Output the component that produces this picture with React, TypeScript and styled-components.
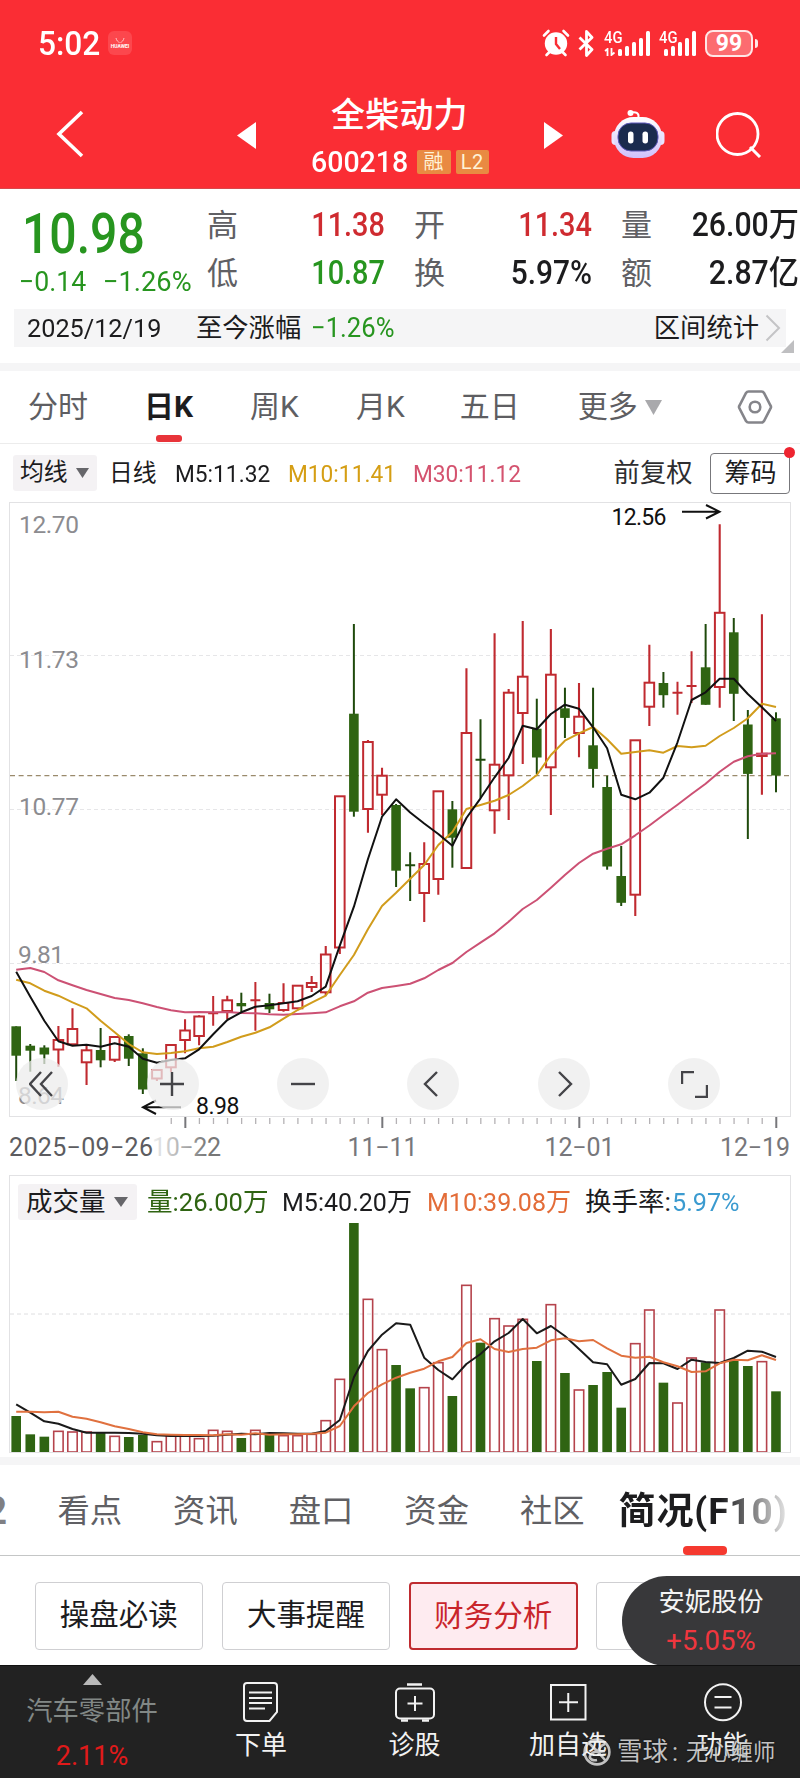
import React from 'react';
import styled, { createGlobalStyle, css } from 'styled-components';

const GlobalStyle = createGlobalStyle`
  * { box-sizing: border-box; }
  body {
    margin: 0;
    background: #fff;
    color: #1c1c1e;
    font-family: Roboto, 'Noto Sans CJK SC', sans-serif;
  }
  svg { display: block; flex: none; }
`;

const RED = '#c02a30';
const GREEN = '#2f6412';

const Screen = styled.div`
  width: 800px;
  height: 1778px;
  overflow: hidden;
  display: flex;
  flex-direction: column;
  background: #fff;
`;

const Label = styled.span<{ $size?: number; $color?: string; $weight?: number; $ml?: number; $dy?: number }>`
  flex: none;
  white-space: nowrap;
  line-height: 1;
  font-size: ${p => p.$size ?? 26}px;
  color: ${p => p.$color ?? '#1c1c1e'};
  font-weight: ${p => p.$weight ?? 400};
  margin-left: ${p => p.$ml ?? 0}px;
  margin-top: ${p => p.$dy ?? 0}px;
`;

/* Condensed figures: the glyphs are narrowed while the box keeps a fixed width */
const Figure = styled(Label)<{ $w: number; $stretch: number; $right?: boolean }>`
  display: flex;
  width: ${p => p.$w}px;
  transform: scaleX(${p => p.$stretch});
  transform-origin: ${p => (p.$right ? 'right' : 'left')} center;
  justify-content: ${p => (p.$right ? 'flex-end' : 'flex-start')};
`;

/* ---------- header ---------- */

const Header = styled.header`
  height: 189px;
  flex: none;
  background: #fa2d34;
  border-bottom: 1px solid #d8484c;
  color: #fff;
`;

const StatusBar = styled.div`
  height: 86px;
  display: flex;
  align-items: center;
  padding: 0 42px 0 38px;
`;

const HuaweiBadge = styled.div`
  width: 24px;
  height: 24px;
  margin-left: 9px;
  border-radius: 6px;
  background: #fc474d;
  display: flex;
  flex-direction: column;
  align-items: center;
  justify-content: center;
  font: 700 5px/6px Roboto, sans-serif;
`;

const StatusIcons = styled.div`
  margin-left: auto;
  display: flex;
  align-items: center;
`;

const Signal = styled.div<{ $w: number; $ml: number }>`
  position: relative;
  width: ${p => p.$w}px;
  height: 26px;
  margin-left: ${p => p.$ml}px;
  display: flex;
  align-items: flex-end;
  justify-content: flex-end;
  gap: 3px;
`;

const SignalName = styled.span`
  position: absolute;
  left: 0;
  top: -1px;
  font-size: 17px;
  line-height: 17px;
  font-weight: 500;
  transform: scaleX(0.87);
  transform-origin: left;
`;

const SignalArrows = styled.svg`
  position: absolute;
  left: 0;
  bottom: 0;
`;

const SignalBar = styled.i<{ $h: number }>`
  width: 4px;
  height: ${p => p.$h}px;
  border-radius: 1.5px;
  background: #fff;
`;

const Battery = styled.div`
  width: 48px;
  height: 27px;
  margin-left: 9px;
  border: 2px solid #ffe6e6;
  border-radius: 8px;
  background: #fc6c70;
  display: flex;
  align-items: center;
  justify-content: center;
  font-size: 23px;
  line-height: 23px;
  font-weight: 700;
`;

const BatteryNub = styled.i`
  width: 3px;
  height: 9px;
  margin-left: 2px;
  border-radius: 0 3px 3px 0;
  background: #ffe6e6;
`;

const TitleBar = styled.div`
  height: 98px;
  display: flex;
  align-items: center;
`;

const TitleBlock = styled.div`
  width: 178px;
  height: 92px;
  margin: 0 55px 0 55px;
  padding-top: 2px;
  display: flex;
  flex-direction: column;
`;

const StockName = styled.div`
  padding-left: 20px;
  font-size: 34px;
  line-height: 48px;
  font-weight: 500;
  letter-spacing: 0.2px;
  white-space: nowrap;
`;

const CodeLine = styled.div`
  display: flex;
  align-items: center;
  height: 40px;
  margin-top: 4px;
`;

const Badge = styled.span<{ $ml: number }>`
  width: 33.5px;
  height: 24px;
  margin-left: ${p => p.$ml}px;
  border-radius: 2px;
  background: #e98a42;
  color: #fff3d8;
  font-size: 20px;
  line-height: 24px;
  text-align: center;
  letter-spacing: 0.5px;
`;

/* ---------- quote ---------- */

const Quote = styled.section`
  height: 120px;
  flex: none;
  display: flex;
  overflow: hidden;
`;

const LastPrice = styled.div`
  width: 208px;
  flex: none;
  padding: 18px 0 0 20px;
`;

const PriceChange = styled.div`
  display: flex;
  margin-top: 6px;
`;

const StatColumn = styled.div<{ $ml: number }>`
  width: 178px;
  flex: none;
  margin-left: ${p => p.$ml}px;
  padding-top: 12px;
`;

const Stat = styled.div`
  height: 48px;
  display: flex;
  align-items: center;
  justify-content: space-between;
`;

const RangeBar = styled.div`
  height: 38px;
  flex: none;
  margin: 0 14px;
  padding: 0 5px 0 13px;
  background: #f5f5f6;
  display: flex;
  align-items: center;
  position: relative;
`;

const Fold = styled.svg`
  position: absolute;
  right: -8px;
  bottom: -6px;
`;

const Band = styled.div<{ $mt: number }>`
  height: 8px;
  flex: none;
  margin-top: ${p => p.$mt}px;
  background: #f5f5f6;
`;

/* ---------- period tabs ---------- */

const PeriodTabs = styled.nav`
  height: 73px;
  flex: none;
  display: flex;
  align-items: center;
  border-bottom: 1px solid #ececec;
`;

const Period = styled.div<{ $active?: boolean; $ml: number }>`
  position: relative;
  margin-left: ${p => p.$ml}px;
  font-size: 30px;
  line-height: 72px;
  white-space: nowrap;
  color: ${p => (p.$active ? '#1c1c1e' : '#5e5e62')};
  font-weight: ${p => (p.$active ? 700 : 400)};
  ${p =>
    p.$active &&
    css`
      &::after {
        content: '';
        position: absolute;
        left: 12px;
        bottom: 1px;
        width: 26px;
        height: 7px;
        border-radius: 3px;
        background: #e8343a;
      }
    `}
`;

const IndicatorRow = styled.div`
  height: 58px;
  flex: none;
  display: flex;
  align-items: center;
  padding-left: 13px;
`;

const Picker = styled.div<{ $w: number; $pl: number }>`
  width: ${p => p.$w}px;
  height: 36px;
  flex: none;
  padding-left: ${p => p.$pl}px;
  border-radius: 3px;
  background: #f4f2f4;
  display: flex;
  align-items: center;
  gap: 8px;
`;

const ChipsButton = styled.div`
  position: relative;
  width: 80px;
  height: 41px;
  margin-left: 18px;
  border: 1.5px solid #77777b;
  border-radius: 4px;
  font-size: 26px;
  line-height: 38px;
  text-align: center;
  white-space: nowrap;
  &::after {
    content: '';
    position: absolute;
    right: -6px;
    top: -7px;
    width: 11px;
    height: 11px;
    border-radius: 50%;
    background: #ee2430;
  }
`;

/* ---------- charts ---------- */

const PriceArea = styled.section`
  position: relative;
  height: 673px;
  flex: none;
`;

const Controls = styled.div`
  position: absolute;
  left: 16.3px;
  top: 556px;
  display: flex;
  gap: 78.4px;
`;

const RoundButton = styled.div`
  width: 52px;
  height: 52px;
  border-radius: 50%;
  background: rgba(236, 236, 236, 0.74);
  display: flex;
  align-items: center;
  justify-content: center;
`;

const VolumePanel = styled.section`
  height: 278px;
  flex: none;
  margin: 0 9px;
  border: 1px solid #e2e2e4;
`;

const VolumeHead = styled.div`
  height: 46px;
  padding: 6px 0 0 8px;
  display: flex;
  align-items: center;
`;

/* ---------- lower sections ---------- */

const SectionTabs = styled.nav`
  height: 91px;
  flex: none;
  display: flex;
  align-items: center;
  border-bottom: 1.5px solid #c4c6c6;
  overflow: hidden;
`;

const SectionTab = styled.div<{ $ml: number }>`
  flex: none;
  margin-left: ${p => p.$ml}px;
  padding-top: 2px;
  font-size: 32.3px;
  line-height: 90px;
  color: #606064;
  white-space: nowrap;
`;

const CutTab = styled(SectionTab)`
  width: 7px;
  display: flex;
  justify-content: flex-end;
  font-weight: 700;
  font-size: 38px;
  color: #808084;
`;

const ActiveSection = styled.div`
  position: relative;
  flex: none;
  margin-left: 34px;
  padding-top: 3px;
  font-size: 37px;
  line-height: 87px;
  font-weight: 700;
  letter-spacing: 0.9px;
  white-space: nowrap;
  span {
    color: transparent;
    background: linear-gradient(90deg, #1c1c1e 60%, #e8e8e8 100%);
    background-clip: text;
  }
  &::after {
    content: '';
    position: absolute;
    left: 64px;
    bottom: 0;
    width: 44px;
    height: 9px;
    border-radius: 4px;
    background: #f5392f;
  }
`;

const ChipRow = styled.div`
  position: relative;
  height: 109px;
  flex: none;
  display: flex;
  gap: 18.8px;
  padding: 26px 0 0 34.5px;
  overflow: hidden;
`;

const Chip = styled.div<{ $active?: boolean }>`
  width: 168.5px;
  height: 68px;
  flex: none;
  border: ${p => (p.$active ? '2px solid #bf2b30' : '1.5px solid #cfcfd2')};
  border-radius: 4px;
  background: ${p => (p.$active ? '#feebf0' : '#fff')};
  color: ${p => (p.$active ? '#c9252b' : '#1c1c1e')};
  font-size: 29.5px;
  line-height: 65px;
  text-align: center;
  white-space: nowrap;
`;

const FloatingQuote = styled.aside`
  position: absolute;
  right: 0;
  top: 20px;
  width: 178px;
  height: 90px;
  padding: 13px 0 0;
  border-radius: 46px 0 0 46px;
  background: #38383a;
  display: flex;
  flex-direction: column;
  align-items: center;
  gap: 12px;
`;

const BottomNav = styled.footer`
  position: relative;
  height: 114px;
  flex: none;
  background: #222;
  border-top: 1px solid #111;
  display: flex;
`;

const Sector = styled.div`
  width: 184px;
  flex: none;
  padding-top: 8px;
  display: flex;
  flex-direction: column;
  align-items: center;
`;

const NavItem = styled.div<{ $w: number }>`
  width: ${p => p.$w}px;
  flex: none;
  padding-top: 15px;
  display: flex;
  flex-direction: column;
  align-items: center;
  gap: 8px;
  color: #f2f2f2;
  font-size: 26px;
  line-height: 28px;
  white-space: nowrap;
`;

const Watermark = styled.div`
  position: absolute;
  left: 583px;
  top: 71px;
  height: 30px;
  display: flex;
  align-items: center;
  color: rgba(235, 235, 235, 0.82);
  font-size: 25px;
  line-height: 30px;
  white-space: nowrap;
  text-shadow: 0 0 2px rgba(0, 0, 0, 0.7);
`;

/* ---------- data ---------- */

// up flag, body top, body bottom, high, low, top of the volume bar
type Candle = [0 | 1, number, number, number, number, number];

const candles: Candle[] = [
  [0, 1026.3, 1055.7, 1026.3, 1081, 738], [0, 1045.7, 1050.7, 1044, 1071.7, 793],
  [0, 1047.5, 1054.5, 1045.3, 1064, 800], [1, 1040, 1049.5, 1026, 1066.7, 784],
  [1, 1029, 1044.3, 1008.3, 1045, 786], [1, 1050.3, 1062.3, 1045, 1085, 786],
  [0, 1050, 1060.3, 1028, 1067.3, 788], [1, 1037, 1059.7, 1036, 1062, 799],
  [0, 1036, 1058.7, 1034.3, 1066, 801], [0, 1053.3, 1089.5, 1048.3, 1094, 795],
  [1, 1070, 1078.5, 1069, 1081, 815], [1, 1045, 1067.3, 1044, 1072, 797],
  [1, 1030.5, 1040, 1019.3, 1053.3, 797], [1, 1016.5, 1036, 1015.3, 1045.3, 806],
  [1, 1013.3, 1013.3, 996, 1025.7, 781], [1, 1000.3, 1011, 995.7, 1019, 784],
  [0, 1003, 1006.3, 992.7, 1012, 804], [1, 1000.3, 1000.3, 982, 1030.7, 781],
  [0, 1003, 1009.3, 993.7, 1013, 794], [1, 1003, 1010, 983.3, 1011.7, 797],
  [1, 985.7, 1008.3, 985, 1009, 797], [1, 983, 987, 976, 992, 793],
  [1, 954.5, 992.3, 946, 995, 752], [1, 796.3, 947.5, 796, 954, 628],
  [0, 713.7, 811.7, 624, 816.7, 159], [1, 742, 809, 740, 832.7, 388],
  [1, 775.7, 794.7, 767.7, 815, 539], [0, 805, 870.7, 804, 887, 585],
  [0, 865.3, 865.3, 852.3, 901, 655], [1, 864, 893, 842.3, 922, 653],
  [1, 791.3, 879, 791, 894.7, 578], [0, 809.3, 837.7, 801, 867.7, 678],
  [1, 733, 868, 668.3, 869, 346], [0, 759.7, 759.7, 719.3, 798.3, 518],
  [1, 764.7, 810.3, 633.3, 833.7, 446], [1, 692.7, 775.3, 689, 820, 468],
  [1, 676.7, 713, 621, 764, 448], [0, 728.7, 757.5, 698.7, 774, 573],
  [1, 674.7, 767.3, 629, 815, 404], [0, 708.3, 717.9, 687.7, 738, 609],
  [1, 716.7, 733, 683, 757.3, 660], [0, 745.3, 768.9, 687.7, 787.7, 645],
  [0, 787, 866.5, 775.7, 869.7, 606], [0, 876, 902.8, 846, 906, 713],
  [1, 740.3, 894.7, 740, 916, 521], [1, 682.7, 706.7, 644.7, 726, 420],
  [0, 683, 695.2, 672, 707.7, 638], [1, 692.7, 692.7, 681.7, 714.7, 699],
  [1, 686, 686, 651.3, 703, 564], [0, 667.3, 704.8, 624, 704.8, 577],
  [1, 612.8, 687, 524.3, 707.7, 420], [0, 632.3, 693.8, 618, 721, 571],
  [0, 724.5, 773.9, 710, 839, 588], [1, 753.7, 756, 614.3, 794.7, 575],
  [0, 718.3, 775.5, 712.3, 792.3, 664],
];

const ma5 = [971.7, 996.7, 1020.7, 1041.3, 1045.7, 1044.7, 1046.7, 1043.3, 1046.7, 1058.7, 1062.7, 1060, 1058.3, 1049.3, 1034.3, 1020, 1012.3, 1006.7, 1005.3, 1003.3, 1001.3, 996, 986.7, 945.7, 906.7, 859.3, 816.7, 799.3, 812.5, 823.5, 834, 845.7, 818, 798.3, 777.3, 758, 725.7, 729.3, 714, 704.7, 708.7, 727.3, 748.3, 794.7, 799.3, 792.7, 777.7, 742.3, 700, 692.3, 678.7, 678.7, 694, 707.3, 721];
const ma10 = [979.7, 983.3, 990.7, 995.7, 1002.3, 1008.3, 1020.7, 1032.3, 1044, 1052.3, 1054, 1053, 1051.3, 1048.3, 1046.7, 1042, 1036.7, 1032.7, 1027.3, 1018.7, 1010, 1002.7, 995.7, 975, 955, 929.3, 906, 892.7, 878.7, 865, 845, 832, 809, 805, 800.7, 795, 786, 775, 755, 740.7, 733.3, 727, 739.3, 753.7, 752, 750.3, 752.7, 746, 747.3, 745.7, 736, 728, 718.3, 703.7, 707];
const ma30 = [969.7, 968, 972, 980.3, 985.3, 990, 994, 998, 1000, 1003.3, 1007, 1010.3, 1012.3, 1012, 1012.3, 1012, 1013, 1013.3, 1014.3, 1014.7, 1014, 1013.3, 1012.3, 1006.3, 1001.3, 992.7, 988, 986, 983.7, 978.3, 970, 963, 952, 942.7, 933.3, 921.7, 909, 900, 887.7, 875, 863, 853.7, 848.7, 844.3, 835.3, 825.5, 815, 804.7, 794, 783.7, 771.7, 761.7, 756.3, 753.7, 753.3];
const vol5 = [703, 728, 754, 761, 777, 788, 788, 788, 789, 791, 796, 798, 798, 798, 797, 794, 791, 793, 789, 790, 791, 791, 783, 750, 622, 543, 494, 460, 464, 563, 600, 628, 582, 552, 514, 489, 447, 490, 468, 498, 537, 577, 583, 644, 627, 579, 580, 597, 569, 576, 579, 564, 542, 545, 561];
const vol10 = [725, 725, 727, 725, 740, 746, 757, 769, 777, 787, 793, 794, 795, 795, 796, 793, 794, 790, 794, 793, 793, 791, 788, 768, 709, 669, 643, 623, 608, 596, 574, 561, 519, 508, 537, 546, 537, 533, 511, 505, 514, 510, 535, 557, 563, 560, 577, 589, 606, 604, 580, 569, 571, 556, 570];

const STEP = 14.07;
const cx = (i: number) => 16.2 + i * STEP;
const volY = (v: number) => 1170 + v / 3;
const path = (values: number[], y: (v: number) => number = v => v) =>
  values.map((v, i) => `${cx(i).toFixed(1)},${y(v).toFixed(1)}`).join(' ');

const Down = ({ w = 14, h = 10, color = '#66666a' }: { w?: number; h?: number; color?: string }) => (
  <svg width={w} height={h} viewBox="0 0 14 10" preserveAspectRatio="none">
    <path d="M0 0H14L7 10Z" fill={color} />
  </svg>
);

function CandleMark({ c, i }: { c: Candle; i: number }) {
  const [up, top, bottom, high, low] = c;
  const x = cx(i);
  if (top === bottom) {
    return (
      <g stroke={up ? RED : '#1f4a0c'} strokeWidth="2">
        <path d={`M${x} ${high}V${low}M${x - 5} ${top}H${x + 5}`} fill="none" />
      </g>
    );
  }
  if (!up) {
    return (
      <g>
        <path d={`M${x} ${high}V${low}`} stroke="#1f4a0c" strokeWidth="2" />
        <rect x={x - 4.8} y={top} width="9.6" height={bottom - top} fill={GREEN} />
      </g>
    );
  }
  return (
    <g stroke={RED} strokeWidth="2.1" fill="none">
      <path d={`M${x} ${high}V${top}M${x} ${bottom}V${low}`} />
      <rect x={x - 4.8} y={top} width="9.6" height={bottom - top} strokeWidth="2" />
    </g>
  );
}

function PriceChart() {
  return (
    <svg width="800" height="673" viewBox="0 502 800 673" fontFamily="Roboto, sans-serif">
      <defs>
        <linearGradient id="fade" gradientUnits="userSpaceOnUse" x1="152" y1="0" x2="208" y2="0">
          <stop offset="0" stopColor="#777" stopOpacity="0.1" />
          <stop offset="1" stopColor="#777" />
        </linearGradient>
      </defs>
      <rect x="9.5" y="502.5" width="781" height="614" fill="none" stroke="#e2e2e4" />
      <g stroke="#e6e6e8" strokeDasharray="4 3">
        <path d="M10 655.5H790" />
        <path d="M10 809.5H790" />
        <path d="M10 963.5H790" />
      </g>
      <path d="M10 775.7H790" stroke="#9a8a6c" strokeDasharray="5 3.6" strokeWidth="1.2" />
      <g fontSize="24.5" fill="#8c8c90">
        <text x="19" y="533" textLength="60">12.70</text>
        <text x="19" y="667.7" textLength="60">11.73</text>
        <text x="19" y="815.4" textLength="60">10.77</text>
        <text x="18" y="963.3" textLength="46">9.81</text>
        <text x="18" y="1104" textLength="46">8.64</text>
      </g>
      {candles.map((c, i) => <CandleMark key={i} c={c} i={i} />)}
      <g fill="none" strokeWidth="2" strokeLinejoin="round">
        <polyline points={path(ma30)} stroke="#cc5174" />
        <polyline points={path(ma10)} stroke="#d19c1c" />
        <polyline points={path(ma5)} stroke="#111" />
      </g>
      <g fontSize="23" fill="#111">
        <text x="611.5" y="524.6" textLength="55">12.56</text>
        <text x="196" y="1113.6" textLength="43.5">8.98</text>
      </g>
      <g fill="none" stroke="#111" strokeWidth="2">
        <path d="M682 511.7H719M706 505L719.5 511.7L706 518.5" />
        <path d="M181 1107.2H143M156 1100.5L143 1107.2L156 1114" />
      </g>
      {candles.map((_, i) => {
        if (i < 11) return null;
        const major = (i - 12) % 14 === 0;
        return (
          <path
            key={i}
            d={`M${cx(i) + 0.3} ${major ? 1117 : 1118}V${major ? 1128 : 1124}`}
            stroke={major ? '#77777b' : '#b5b2b5'}
            strokeWidth={major ? 2 : 1.3}
          />
        );
      })}
      <g fontSize="25" fill="#77777b">
        <text x="9" y="1156.3" textLength="144" fill="#5c5c60">2025−09−26</text>
        <text x="152" y="1156.3" textLength="69" fill="url(#fade)">10−22</text>
        <text x="347.5" y="1156.3" textLength="70">11−11</text>
        <text x="544.5" y="1156.3" textLength="70">12−01</text>
        <text x="720" y="1156.3" textLength="70">12−19</text>
      </g>
    </svg>
  );
}

function VolumeChart() {
  return (
    <svg width="780" height="230" viewBox="10 1222 780 230">
      <path d="M10 1314H790" stroke="#dedee0" strokeDasharray="4 3" />
      {candles.map((c, i) => {
        const y = volY(c[5]);
        return c[0] ? (
          <rect key={i} x={cx(i) - 4.7} y={y} width="9.4" height={1452 - y} fill="none" stroke="#b5434c" strokeWidth="1.600" />
        ) : (
          <rect key={i} x={cx(i) - 4.8} y={y} width="9.6" height={1453 - y} fill={GREEN} />
        );
      })}
      <g fill="none" strokeWidth="2" strokeLinejoin="round">
        <polyline points={path(vol5, volY)} stroke="#1a1a1a" />
        <polyline points={path(vol10, volY)} stroke="#e0713f" />
      </g>
    </svg>
  );
}

const controlPaths = [
  'M12 1L1 13L12 25M23 1L12 13L23 25',
  'M1 13H25M13 1V25',
  'M1 13H25',
  'M17 1L5 13L17 25',
  'M9 1L21 13L9 25',
  'M1 13V1H13M26 14V26H14',
];

const periods = [
  { text: '分时', ml: 28 },
  { text: '日K', ml: 56 },
  { text: '周K', ml: 57 },
  { text: '月K', ml: 57 },
  { text: '五日', ml: 55 },
  { text: '更多', ml: 58 },
];

export default function App() {
  return (
    <Screen>
      <GlobalStyle />
      <Header>
        <StatusBar>
          <Figure $w={61} $stretch={0.96} $size={33} $weight={500} $color="#fff">5:02</Figure>
          <HuaweiBadge>
            <svg width="10" height="6" viewBox="0 0 10 6">
              <path d="M1 1C1.5 3.500 3 5 4.500 5.500M9 1C8.500 3.500 7 5 5.500 5.500" fill="none" stroke="#ffc4c4" />
            </svg>
            HUAWEI
          </HuaweiBadge>
          <StatusIcons>
            <svg width="28" height="28" viewBox="0 0 28 28">
              <circle cx="14" cy="14.500" r="11.200" fill="#fff" />
              <path d="M2 6.500L6.500 2M26 6.500L21.500 2M7.500 23L4.500 26M20.500 23L23.500 26" stroke="#fff" strokeWidth="2.600" strokeLinecap="round" />
              <path d="M14 8V15L18 20" fill="none" stroke="#fa2d34" strokeWidth="2.400" />
            </svg>
            <svg width="17" height="27" viewBox="0 0 17 27" style={{ marginLeft: 8 }}>
              <path d="M1.500 7.500L14 19.500L8.500 25.500V1.500L14 7.500L1.500 19.500" fill="none" stroke="#fff" strokeWidth="2.800" strokeLinejoin="round" />
            </svg>
            <Signal $w={46} $ml={9}>
              <SignalName>4G</SignalName>
              <SignalArrows width="12" height="8" viewBox="0 0 12 8">
                <path d="M1 3L3.500 1V8M7.500 0V7L10.500 4.500" fill="none" stroke="#fff" strokeWidth="1.800" />
              </SignalArrows>
              {[7, 10.5, 14, 18.5, 25].map(h => <SignalBar key={h} $h={h} />)}
            </Signal>
            <Signal $w={37} $ml={9}>
              <SignalName>4G</SignalName>
              {[7, 10.5, 14, 18.5, 25].map(h => <SignalBar key={h} $h={h} />)}
            </Signal>
            <Battery>99</Battery>
            <BatteryNub />
          </StatusIcons>
        </StatusBar>
        <TitleBar>
          <svg width="28" height="48" viewBox="0 0 28 48" style={{ marginLeft: 56, marginTop: -2 }}>
            <path d="M26 2L3 24L26 46" fill="none" stroke="#fff" strokeWidth="3.600" />
          </svg>
          <svg width="19" height="27" viewBox="0 0 19 27" style={{ marginLeft: 153 }}>
            <path d="M0 13.500L19 0V27Z" fill="#fff" />
          </svg>
          <TitleBlock>
            <StockName>全柴动力</StockName>
            <CodeLine>
              <Figure $w={97} $stretch={0.95} $size={30} $weight={500} $color="#fff">600218</Figure>
              <Badge $ml={9}>融</Badge>
              <Badge $ml={5}>L2</Badge>
            </CodeLine>
          </TitleBlock>
          <svg width="19" height="27" viewBox="0 0 19 27">
            <path d="M19 13.500L0 0V27Z" fill="#fff" />
          </svg>
          <svg width="54" height="50" viewBox="0 0 54 50" style={{ marginLeft: 48, marginTop: -3 }}>
            <defs>
              <linearGradient id="shell" x1="0" y1="0" x2="0" y2="1">
                <stop offset="0" stopColor="#fff" />
                <stop offset="1" stopColor="#cfc0fb" />
              </linearGradient>
            </defs>
            <path d="M20 3.500C25 2.500 28 4 27.500 8" fill="none" stroke="#fff" strokeWidth="2" />
            <circle cx="19.500" cy="4" r="3" fill="#fff" />
            <rect x="0.500" y="22" width="8" height="14" rx="4" fill="#e9e4ff" />
            <rect x="45.500" y="22" width="8" height="14" rx="4" fill="#e9e4ff" />
            <rect x="3" y="8" width="48" height="41" rx="19.500" fill="url(#shell)" />
            <rect x="7" y="14" width="40" height="28" rx="13" fill="#1a2b4e" stroke="#5b57b8" />
            <rect x="17" y="22.500" width="5.500" height="12" rx="2.700" fill="#fff" />
            <rect x="31.500" y="22.500" width="5.500" height="12" rx="2.700" fill="#fff" />
          </svg>
          <svg width="46" height="46" viewBox="0 0 46 46" style={{ marginLeft: 51 }}>
            <circle cx="21.500" cy="22" r="20.500" fill="none" stroke="#fff" strokeWidth="2.800" />
            <path d="M34 35L44 45" stroke="#fff" strokeWidth="3" />
          </svg>
        </TitleBar>
      </Header>

      <Quote>
        <LastPrice>
          <Figure $ml={2} $w={122} $stretch={0.875} $size={55} $weight={500} $color="#27951f">10.98</Figure>
          <PriceChange>
            <Figure $ml={-1} $w={84} $stretch={0.97} $size={27.5} $color="#27951f">−0.14</Figure>
            <Figure $w={90} $stretch={0.99} $size={27.5} $color="#27951f">−1.26%</Figure>
          </PriceChange>
        </LastPrice>
        <StatColumn $ml={-1}>
          <Stat>
            <Label $size={31} $color="#606064">高</Label>
            <Figure $w={90} $stretch={0.89} $right $size={32.5} $weight={500} $color="#cf2b30">11.38</Figure>
          </Stat>
          <Stat>
            <Label $size={31} $color="#606064">低</Label>
            <Figure $w={90} $stretch={0.89} $right $size={32.5} $weight={500} $color="#27951f">10.87</Figure>
          </Stat>
        </StatColumn>
        <StatColumn $ml={29}>
          <Stat>
            <Label $size={31} $color="#606064">开</Label>
            <Figure $w={90} $stretch={0.89} $right $size={32.5} $weight={500} $color="#cf2b30">11.34</Figure>
          </Stat>
          <Stat>
            <Label $size={31} $color="#606064">换</Label>
            <Figure $w={90} $stretch={0.92} $right $size={32.5} $weight={500}>5.97%</Figure>
          </Stat>
        </StatColumn>
        <StatColumn $ml={29}>
          <Stat>
            <Label $size={31} $color="#606064">量</Label>
            <Figure $w={110} $stretch={0.93} $right $size={32.5} $weight={500}>26.00万</Figure>
          </Stat>
          <Stat>
            <Label $size={31} $color="#606064">额</Label>
            <Figure $w={110} $stretch={0.93} $right $size={32.5} $weight={500}>2.87亿</Figure>
          </Stat>
        </StatColumn>
      </Quote>

      <RangeBar>
        <Figure $w={169} $stretch={0.96} $size={26.3}>2025/12/19</Figure>
        <Label $size={26.3}>至今涨幅</Label>
        <Figure $ml={10} $w={90} $stretch={0.95} $size={27} $color="#27951f">−1.26%</Figure>
        <Label $size={26.3} style={{ marginLeft: 'auto' }}>区间统计</Label>
        <svg width="16" height="28" viewBox="0 0 16 28" style={{ marginLeft: 6 }}>
          <path d="M1.500 1.500L14 14L1.500 26.500" fill="none" stroke="#c4c4c6" strokeWidth="2" />
        </svg>
        <Fold width="13" height="13" viewBox="0 0 13 13">
          <path d="M13 0V13H0Z" fill="#bfbfc1" />
        </Fold>
      </RangeBar>

      <Band $mt={16} />

      <PeriodTabs>
        {periods.map(p => (
          <Period key={p.text} $ml={p.ml} $active={p.text === '日K'}>{p.text}</Period>
        ))}
        <span style={{ marginLeft: 7 }}><Down w={17} h={15} color="#a9a9ac" /></span>
        <svg width="36" height="34" viewBox="0 0 36 34" style={{ marginLeft: 75 }}>
          <path d="M11.500 1.500H24.500Q26 1.500 27 3L33.500 15.500Q34.500 17 33.500 18.500L27 31Q26 32.500 24.500 32.500H11.500Q10 32.500 9 31L2.500 18.500Q1.500 17 2.500 15.500L9 3Q10 1.500 11.500 1.500Z" fill="none" stroke="#85858a" strokeWidth="2.600" />
          <circle cx="18" cy="17" r="5.300" fill="none" stroke="#85858a" strokeWidth="2.600" />
        </svg>
      </PeriodTabs>

      <IndicatorRow>
        <Picker $w={84} $pl={7}>
          <Label $size={23.8}>均线</Label>
          <Down w={13} h={10} />
        </Picker>
        <Label $size={23.8} $ml={12} $dy={1}>日线</Label>
        <Figure $ml={18} $dy={3} $w={113} $stretch={0.935} $size={24.3}>M5:11.32</Figure>
        <Figure $dy={3} $w={125} $stretch={0.935} $size={24.3} $color="#d59e14">M10:11.41</Figure>
        <Figure $dy={3} $w={201} $stretch={0.935} $size={24.3} $color="#d4536f">M30:11.12</Figure>
        <Label $size={26.3} $color="#2e2e30">前复权</Label>
        <ChipsButton>筹码</ChipsButton>
      </IndicatorRow>

      <PriceArea>
        <PriceChart />
        <Controls>
          {controlPaths.map(d => (
            <RoundButton key={d}>
              <svg width="27" height="27" viewBox="0 0 27 27">
                <path d={d} fill="none" stroke="#444448" strokeWidth="2.400" />
              </svg>
            </RoundButton>
          ))}
        </Controls>
      </PriceArea>

      <VolumePanel>
        <VolumeHead>
          <Picker $w={119} $pl={8}>
            <Label $size={26.5}>成交量</Label>
            <Down />
          </Picker>
          <Figure $ml={10} $w={136} $stretch={0.965} $size={26.5} $color={GREEN}>量:26.00万</Figure>
          <Figure $ml={-1} $w={145} $stretch={0.945} $size={26.5}>M5:40.20万</Figure>
          <Figure $w={158} $stretch={0.945} $size={26.5} $color="#e36c38">M10:39.08万</Figure>
          <Label $size={26.5}>换手率:</Label>
          <Figure $ml={1} $w={80} $stretch={0.95} $size={26.5} $color="#3b9bd0">5.97%</Figure>
        </VolumeHead>
        <VolumeChart />
      </VolumePanel>

      <Band $mt={4} />

      <SectionTabs>
        <CutTab $ml={0}>L2</CutTab>
        <SectionTab $ml={50.5}>看点</SectionTab>
        <SectionTab $ml={51}>资讯</SectionTab>
        <SectionTab $ml={51}>盘口</SectionTab>
        <SectionTab $ml={51}>资金</SectionTab>
        <SectionTab $ml={51}>社区</SectionTab>
        <ActiveSection><span>简况(F10)</span></ActiveSection>
      </SectionTabs>

      <ChipRow>
        <Chip>操盘必读</Chip>
        <Chip>大事提醒</Chip>
        <Chip $active>财务分析</Chip>
        <Chip />
        <FloatingQuote>
          <Label $size={26.3} $color="#f4f4f4">安妮股份</Label>
          <Label $size={27.5} $color="#f0363e">+5.05%</Label>
        </FloatingQuote>
      </ChipRow>

      <BottomNav>
        <Sector>
          <svg width="19" height="11" viewBox="0 0 19 11"><path d="M9.500 0L19 11H0Z" fill="#b9b9b9" /></svg>
          <Label $size={26.3} $color="#828886" $dy={13}>汽车零部件</Label>
          <Label $size={27} $color="#e01a1a" $dy={19}>2.11%</Label>
        </Sector>
        <NavItem $w={154}>
          <svg width="38" height="42" viewBox="0 0 38 42" fill="none" stroke="#f2f2f2" strokeWidth="2">
            <path d="M5 2H32Q35 2 35 5V31L27.500 40H5Q2 40 2 37V5Q2 2 5 2Z" />
            <path d="M7 11.500H30M7 17H30M7 22H30M7 27.500H23" />
          </svg>
          下单
        </NavItem>
        <NavItem $w={153}>
          <svg width="44" height="42" viewBox="0 0 44 42" fill="none" stroke="#f2f2f2" strokeWidth="2">
            <rect x="3" y="7.500" width="38" height="30" rx="4" />
            <path d="M14 3.500H29M8 39.500H15M29 39.500H36" strokeWidth="2.500" />
            <path d="M22 15V30M14.500 22.500H29.500" />
          </svg>
          诊股
        </NavItem>
        <NavItem $w={154}>
          <svg width="38" height="42" viewBox="0 0 38 42" fill="none" stroke="#f2f2f2" strokeWidth="2">
            <rect x="2" y="4" width="34.500" height="34.500" />
            <path d="M19.250 12V31M10 21.250H29" />
          </svg>
          加自选
        </NavItem>
        <NavItem $w={155}>
          <svg width="40" height="42" viewBox="0 0 40 42" fill="none" stroke="#f2f2f2" strokeWidth="2">
            <circle cx="20" cy="21.300" r="18" />
            <path d="M11.500 16H28.500M11.500 26.500H28.500" />
          </svg>
          功能
        </NavItem>
        <Watermark>
          <svg width="28" height="28" viewBox="0 0 28 28" fill="none" stroke="rgba(235,235,235,0.8)" strokeWidth="2.600">
            <circle cx="14" cy="14" r="12.400" />
            <path d="M6 5C10 9 13 12 15 14L22 22M15 14C12 13 8 15 7 18C6 21 10 23 14 22M22 6C19 7 16 10 15 14L22 13" />
          </svg>
          <Label $size={25.5} $ml={6} $color="inherit">雪球</Label>
          <Label $size={25} $ml={4} $color="inherit">:</Label>
          <Label $size={22.3} $ml={8} $color="inherit">无心缠师</Label>
        </Watermark>
      </BottomNav>
    </Screen>
  );
}
